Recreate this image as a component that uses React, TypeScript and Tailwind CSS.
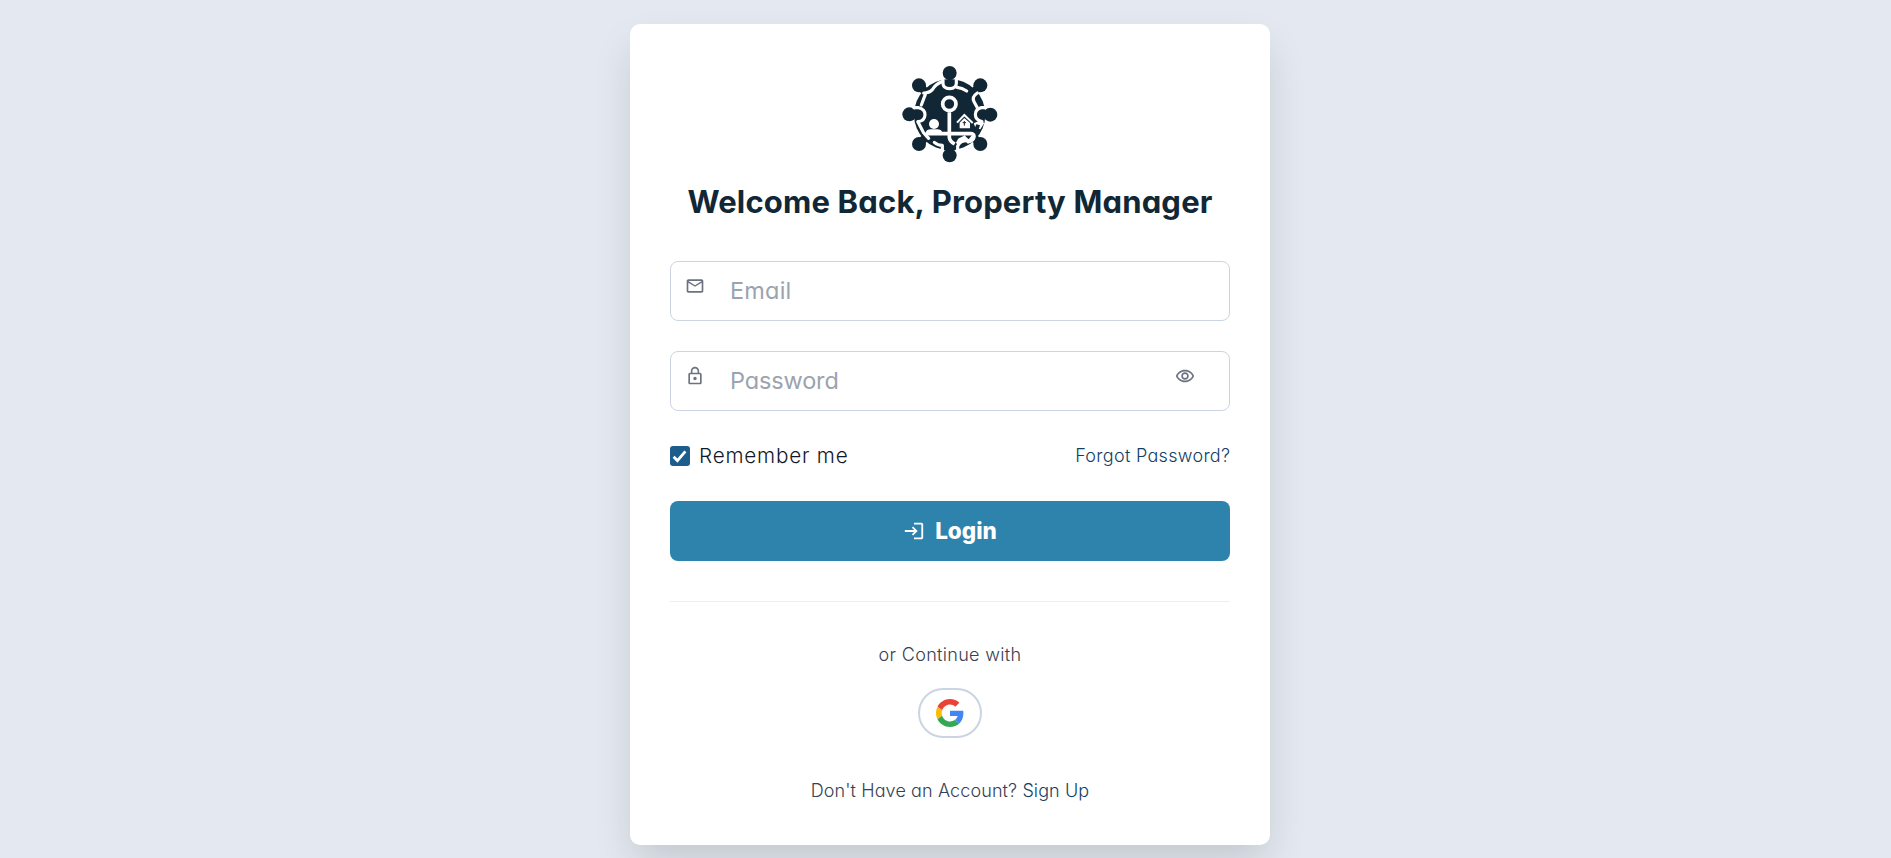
import { MdLockOutline, MdLogin, MdMailOutline, MdOutlineRemoveRedEye } from "react-icons/md";

function Logo() {
  const knobs: [number, number][] = [
    [179, 54], [271, 91], [301, 179], [271, 267], [179, 301], [87, 267], [58, 178], [87, 91],
  ];
  return (
    <svg viewBox="30 27 300 300" className="size-[100px]" role="img" aria-label="Logo">
      <circle cx="179" cy="179" r="107" fill="#122735" />
      <path d="M87 91l26 26M271 91l-26 26M87 267l26-26M271 267l-26-26" stroke="#122735" strokeWidth="24" />
      {knobs.map(([x, y]) => (
        <circle key={`${x}-${y}`} cx={x} cy={y} r="21" fill="#122735" />
      ))}
      <g fill="none" stroke="#fff" strokeWidth="9.5" strokeLinecap="round" strokeLinejoin="round">
        <path d="M159 76 V85 Q159 101 179 101 Q199 101 199 85 V76" />
        <path d="M201 97 Q216 98 230 108" />
        <path d="M262 114 Q243 126 253 142 L262 158" />
        <path d="M284 158 H274 Q256 162 256 179 Q257 196 276 200" />
        <path d="M101 114 Q118 114 127 104 Q136 88 155 80" />
        <path d="M106 118 L94 150 M72 158 H86 Q106 163 105 180 Q104 198 84 200" />
        <path d="M84 201 L100 232 L116 250" />
        <path d="M133 262 Q143 271 157 271 V286" />
        <path d="M203 286 V273 Q212 254 238 258 L249 244" />
      </g>
      <path d="M251 205l17-8 15 7-12 19-14-4z" fill="#fff" />
      <path d="M259 208l11 3-5 15-12-3z" fill="#122735" />
      <circle cx="178" cy="147" r="20" fill="#122735" stroke="#fff" strokeWidth="11" />
      <path d="M178 172V247q1 12 16 20M108 236h130q14-2 14 8-1 12-17 16l-12-12-14 7-7 12" fill="none" stroke="#fff" strokeWidth="11" />
      <circle cx="132" cy="207" r="15" fill="#fff" />
      <path d="M107 233q3-10 15-10h20q12 0 15 10z" fill="#fff" />
      <path d="M201 203l22-23 25 24" fill="none" stroke="#fff" strokeWidth="6" />
      <path d="M209 203l14-14 17 15v16h-31z" fill="#fff" />
      <path d="M223 198v14M218 203h10" fill="none" stroke="#122735" strokeWidth="3" />
    </svg>
  );
}

function GoogleLogo() {
  return (
    <svg viewBox="0 0 48 48" className="size-7" aria-hidden="true">
      <path fill="#EA4335" d="M24 9.5c3.54 0 6.71 1.22 9.21 3.6l6.85-6.85C35.9 2.38 30.47 0 24 0 14.62 0 6.51 5.38 2.56 13.22l7.98 6.19C12.43 13.72 17.74 9.5 24 9.5z" />
      <path fill="#4285F4" d="M46.98 24.55c0-1.57-.15-3.09-.38-4.55H24v9.02h12.94c-.58 2.96-2.26 5.48-4.78 7.18l7.73 6c4.51-4.18 7.09-10.36 7.09-17.65z" />
      <path fill="#FBBC05" d="M10.53 28.59c-.48-1.45-.76-2.99-.76-4.59s.27-3.14.76-4.59l-7.98-6.19C.92 16.46 0 20.12 0 24c0 3.88.92 7.54 2.56 10.78l7.97-6.19z" />
      <path fill="#34A853" d="M24 48c6.48 0 11.93-2.13 15.89-5.81l-7.73-6c-2.15 1.45-4.92 2.3-8.16 2.3-6.26 0-11.57-4.22-13.47-9.91l-7.98 6.19C6.51 42.62 14.62 48 24 48z" />
    </svg>
  );
}

export default function App() {
  return (
    <div className="h-[858px] overflow-hidden bg-[#e4e9f1] font-[Inter,sans-serif] [font-feature-settings:'cv11']">
      <main className="flex w-[1900px] justify-center pt-6">
        <div className="flex h-[821px] w-[640px] flex-col rounded-[10px] bg-white px-10 pt-10 shadow-[0_20px_40px_-4px_rgba(0,0,0,0.145)]">
          <div className="flex justify-center">
            <Logo />
          </div>
          <h1 className="mt-5 text-center text-[31px] leading-9 font-bold tracking-[0.17px] whitespace-nowrap text-[#122735]">
            Welcome Back, Property Manager
          </h1>

          <form className="mt-[41px] flex flex-col" onSubmit={(e) => e.preventDefault()}>
            <label className="flex h-[60px] items-center rounded-lg border border-[#cbd5e1] pl-[14px]">
              <MdMailOutline className="mb-[10px] size-5 shrink-0 text-[#6b7280]" />
              <input
                type="email"
                placeholder="Email"
                className="ml-[25px] min-w-0 flex-1 text-[23.5px] tracking-[0.2px] outline-none placeholder:text-[#9ca3af]"
              />
            </label>
            <label className="mt-[30px] flex h-[60px] items-center rounded-lg border border-[#cbd5e1] pr-[34px] pl-[14px]">
              <MdLockOutline className="mb-[10px] size-5 shrink-0 text-[#6b7280]" />
              <input
                type="password"
                placeholder="Password"
                className="ml-[25px] min-w-0 flex-1 text-[23.5px] tracking-[-0.15px] outline-none placeholder:text-[#9ca3af]"
              />
              <MdOutlineRemoveRedEye className="mb-[10px] size-5 shrink-0 text-[#6b7280]" />
            </label>

            <div className="mt-[30px] flex h-[30px] items-center justify-between">
              <div className="flex items-center gap-[9px]">
                <span className="flex size-5 items-center justify-center rounded-[3px] bg-[#1c5d8c]">
                  <svg viewBox="0 0 20 20" className="size-5" aria-hidden="true">
                    <path d="M3.6 10.8l3.8 3.8L15.4 5.4" fill="none" stroke="#fff" strokeWidth="2.8" />
                  </svg>
                </span>
                <span className="text-[20.7px] leading-[30px] font-light tracking-[0.8px] text-[#111827]">Remember me</span>
              </div>
              <a className="-mr-[0.3px] text-[18px] leading-[30px] font-light tracking-[0.3px] text-[#123f63]">Forgot Password?</a>
            </div>

            <button className="mt-[30px] flex h-[60px] items-center justify-center gap-[10px] rounded-lg bg-[#2e83ad] text-white">
              <MdLogin className="size-[22px]" />
              <span className="text-[22.5px] font-extrabold">Login</span>
            </button>
          </form>

          <hr className="mt-[39px] translate-y-px border-[#edeff2]" />
          <p className="mt-[40px] text-center text-[18px] leading-[27px] font-light tracking-[0.32px] text-[#374151]">or Continue with</p>
          <div className="mt-5 flex justify-center">
            <button className="flex h-[50px] w-16 items-center justify-center rounded-full border-2 border-[#cbd5e1]">
              <GoogleLogo />
            </button>
          </div>
          <p className="mt-[39px] text-center text-[18px] leading-[27px] font-light tracking-[0.11px] text-[#374151]">
            Don't Have an Account? <a className="text-[#123f63]">Sign Up</a>
          </p>
        </div>
      </main>
    </div>
  );
}
